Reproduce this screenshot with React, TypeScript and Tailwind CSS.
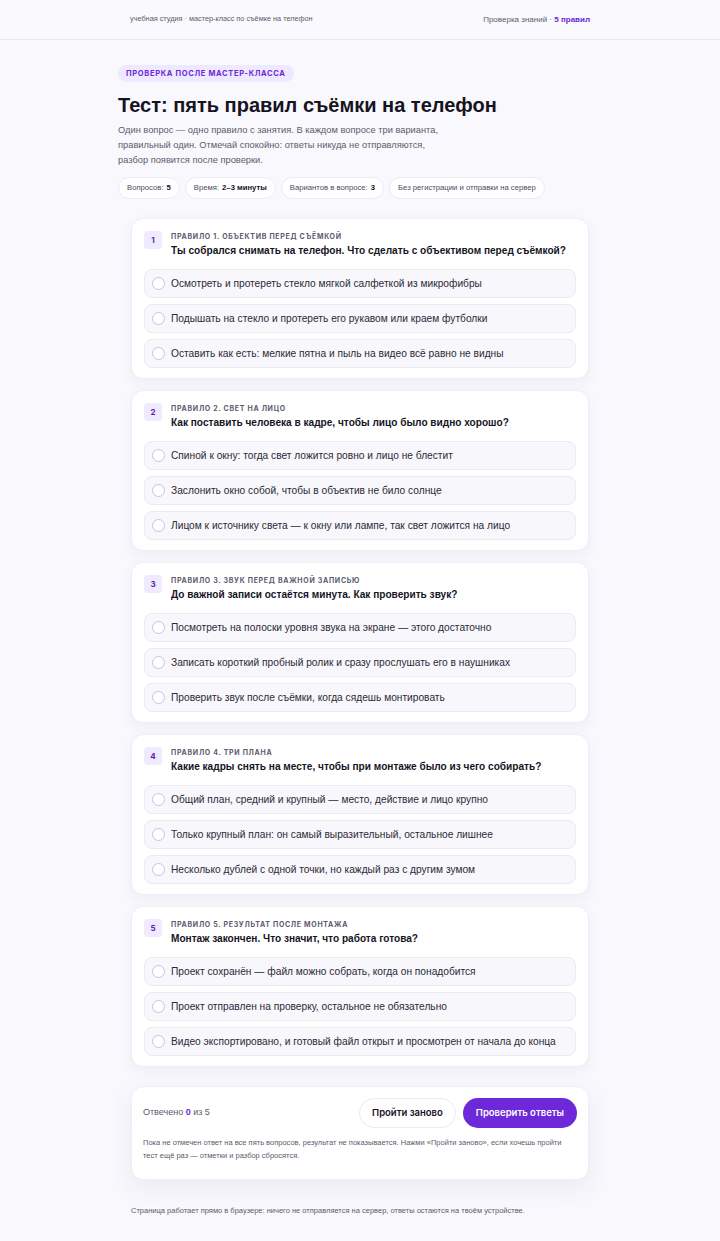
import React, { useState } from "react";

type Q = {
  label: string;
  question: string;
  options: string[];
};

const questions: Q[] = [
  {
    label: "Правило 1. Объектив перед съёмкой",
    question: "Ты собрался снимать на телефон. Что сделать с объективом перед съёмкой?",
    options: [
      "Осмотреть и протереть стекло мягкой салфеткой из микрофибры",
      "Подышать на стекло и протереть его рукавом или краем футболки",
      "Оставить как есть: мелкие пятна и пыль на видео всё равно не видны",
    ],
  },
  {
    label: "Правило 2. Свет на лицо",
    question: "Как поставить человека в кадре, чтобы лицо было видно хорошо?",
    options: [
      "Спиной к окну: тогда свет ложится ровно и лицо не блестит",
      "Заслонить окно собой, чтобы в объектив не било солнце",
      "Лицом к источнику света — к окну или лампе, так свет ложится на лицо",
    ],
  },
  {
    label: "Правило 3. Звук перед важной записью",
    question: "До важной записи остаётся минута. Как проверить звук?",
    options: [
      "Посмотреть на полоски уровня звука на экране — этого достаточно",
      "Записать короткий пробный ролик и сразу прослушать его в наушниках",
      "Проверить звук после съёмки, когда сядешь монтировать",
    ],
  },
  {
    label: "Правило 4. Три плана",
    question: "Какие кадры снять на месте, чтобы при монтаже было из чего собирать?",
    options: [
      "Общий план, средний и крупный — место, действие и лицо крупно",
      "Только крупный план: он самый выразительный, остальное лишнее",
      "Несколько дублей с одной точки, но каждый раз с другим зумом",
    ],
  },
  {
    label: "Правило 5. Результат после монтажа",
    question: "Монтаж закончен. Что значит, что работа готова?",
    options: [
      "Проект сохранён — файл можно собрать, когда он понадобится",
      "Проект отправлен на проверку, остальное не обязательно",
      "Видео экспортировано, и готовый файл открыт и просмотрен от начала до конца",
    ],
  },
];

const arial = "font-[family-name:'Liberation_Sans',Arial,sans-serif]";
const inter = "font-[family-name:'Inter','Liberation_Sans',sans-serif]";

const Chip = ({ label, value }: { label: string; value?: string }) => (
  <span className="h-[22px] px-[8px] flex items-center rounded-full bg-white border border-[#ecebf3] text-[7.7px] text-[#4b4b5c]">
    {label}
    {value && <b className="ml-[3px] text-[#16141f]">{value}</b>}
  </span>
);

const App: React.FC = () => {
  const [answers, setAnswers] = useState<Record<number, number>>({});
  const answered = Object.keys(answers).length;

  return (
    <div className={`min-h-[1241px] bg-[#f9f8fd] ${arial} text-[#16141f]`}>
      <header className="h-[40px] border-b border-[#e9e7f1] bg-[#faf9fd]">
        <div className="max-w-[460px] mx-auto h-full flex items-center justify-between text-[#5c5b6c]">
          <span className="text-[7.3px] font-[family-name:'Liberation_Sans_Narrow','Liberation_Sans',sans-serif]">
            учебная студия · мастер-класс по съёмке на телефон
          </span>
          <span className="text-[8px]">
            Проверка знаний · <b className="text-[#6d28d9]">5 правил</b>
          </span>
        </div>
      </header>

      <main className="max-w-[484px] mx-auto pt-[25px]">
        <div className="flex">
          <span
            className={`flex items-center h-[17px] px-[8px] rounded-full bg-[#ede9fe] text-[#6d28d9] ${inter} font-bold uppercase text-[7.5px] tracking-[0.09em]`}
          >
            Проверка после мастер-класса
          </span>
        </div>
        <h1 className="mt-[10px] text-[20px] leading-[26px] font-bold text-[#16141f]">
          Тест: пять правил съёмки на телефон
        </h1>
        <p className="mt-[5px] max-w-[336px] text-[9.3px] leading-[15px] text-[#5c5b6c]">
          Один вопрос — одно правило с занятия. В каждом вопросе три варианта, правильный один.
          Отмечай спокойно: ответы никуда не отправляются, разбор появится после проверки.
        </p>
        <div className="mt-[9px] flex gap-[5px]">
          <Chip label="Вопросов:" value="5" />
          <Chip label="Время:" value="2–3 минуты" />
          <Chip label="Вариантов в вопросе:" value="3" />
          <Chip label="Без регистрации и отправки на сервер" />
        </div>

        <div className="mt-[19px] px-[13px] flex flex-col gap-[11px]">
          {questions.map((q, qi) => (
            <section
              key={qi}
              className="bg-white rounded-[12px] border border-[#efedf5] shadow-[0_4px_14px_rgba(80,60,140,0.06)] px-[12px] pt-[12px] pb-[10px]"
            >
              <div className="flex gap-[9px]">
                <span
                  className={`shrink-0 w-[18px] h-[18px] rounded-[4px] bg-[#efeafd] flex items-center justify-center ${inter} font-bold text-[8px] text-[#5b21b6]`}
                >
                  {qi + 1}
                </span>
                <div>
                  <div
                    className={`${inter} text-[7px] leading-[10px] font-bold uppercase tracking-[0.1em] text-[#5c5b6c] mt-[1px]`}
                  >
                    {q.label}
                  </div>
                  <h2 className="text-[10.1px] leading-[14px] font-bold text-[#16141f] mt-[2px]">
                    {q.question}
                  </h2>
                </div>
              </div>
              <div className="mt-[11px] flex flex-col gap-[6px]">
                {q.options.map((o, oi) => {
                  const checked = answers[qi] === oi;
                  return (
                    <label
                      key={oi}
                      onClick={() => setAnswers((p) => ({ ...p, [qi]: oi }))}
                      className="h-[29px] px-[7px] flex items-center gap-[6px] rounded-[8px] bg-[#f8f7fc] border border-[#eceaf3] cursor-pointer"
                    >
                      <span
                        className={`shrink-0 w-[13px] h-[13px] rounded-full border-[1.5px] ${
                          checked ? "border-[#6d28d9] bg-[#6d28d9]" : "border-[#c9bff0] bg-white"
                        }`}
                      />
                      <span className="text-[10.2px] text-[#2b2a36]">{o}</span>
                    </label>
                  );
                })}
              </div>
            </section>
          ))}

          <section className="mt-[8px] bg-white rounded-[12px] border border-[#efedf5] shadow-[0_8px_24px_rgba(80,60,140,0.08)] px-[11px] pt-[11px] pb-[17px]">
            <div className="flex items-center justify-between">
              <span className="text-[9px] text-[#5c5b6c]">
                Отвечено <b className="text-[#6d28d9]">{answered}</b> из 5
              </span>
              <div className={`flex gap-[7px] ${inter}`}>
                <button
                  onClick={() => setAnswers({})}
                  className="h-[30px] px-[12px] rounded-full bg-white border border-[#eceaf3] text-[9.5px] font-semibold text-[#16141f]"
                >
                  Пройти заново
                </button>
                <button className="h-[30px] px-[13px] rounded-full bg-[#6d28d9] text-[9.5px] font-semibold text-white">
                  Проверить ответы
                </button>
              </div>
            </div>
            <p className="mt-[8px] text-[7.5px] leading-[13px] text-[#5c5b6c] max-w-[430px]">
              Пока не отмечен ответ на все пять вопросов, результат не показывается. Нажми «Пройти заново», если хочешь пройти тест ещё раз — отметки и разбор сбросятся.
            </p>
          </section>

          <p className="mt-[14px] text-[7.5px] text-[#5c5b6c]">
            Страница работает прямо в браузере: ничего не отправляется на сервер, ответы остаются на твоём устройстве.
          </p>
        </div>
      </main>
    </div>
  );
};

export default App;
